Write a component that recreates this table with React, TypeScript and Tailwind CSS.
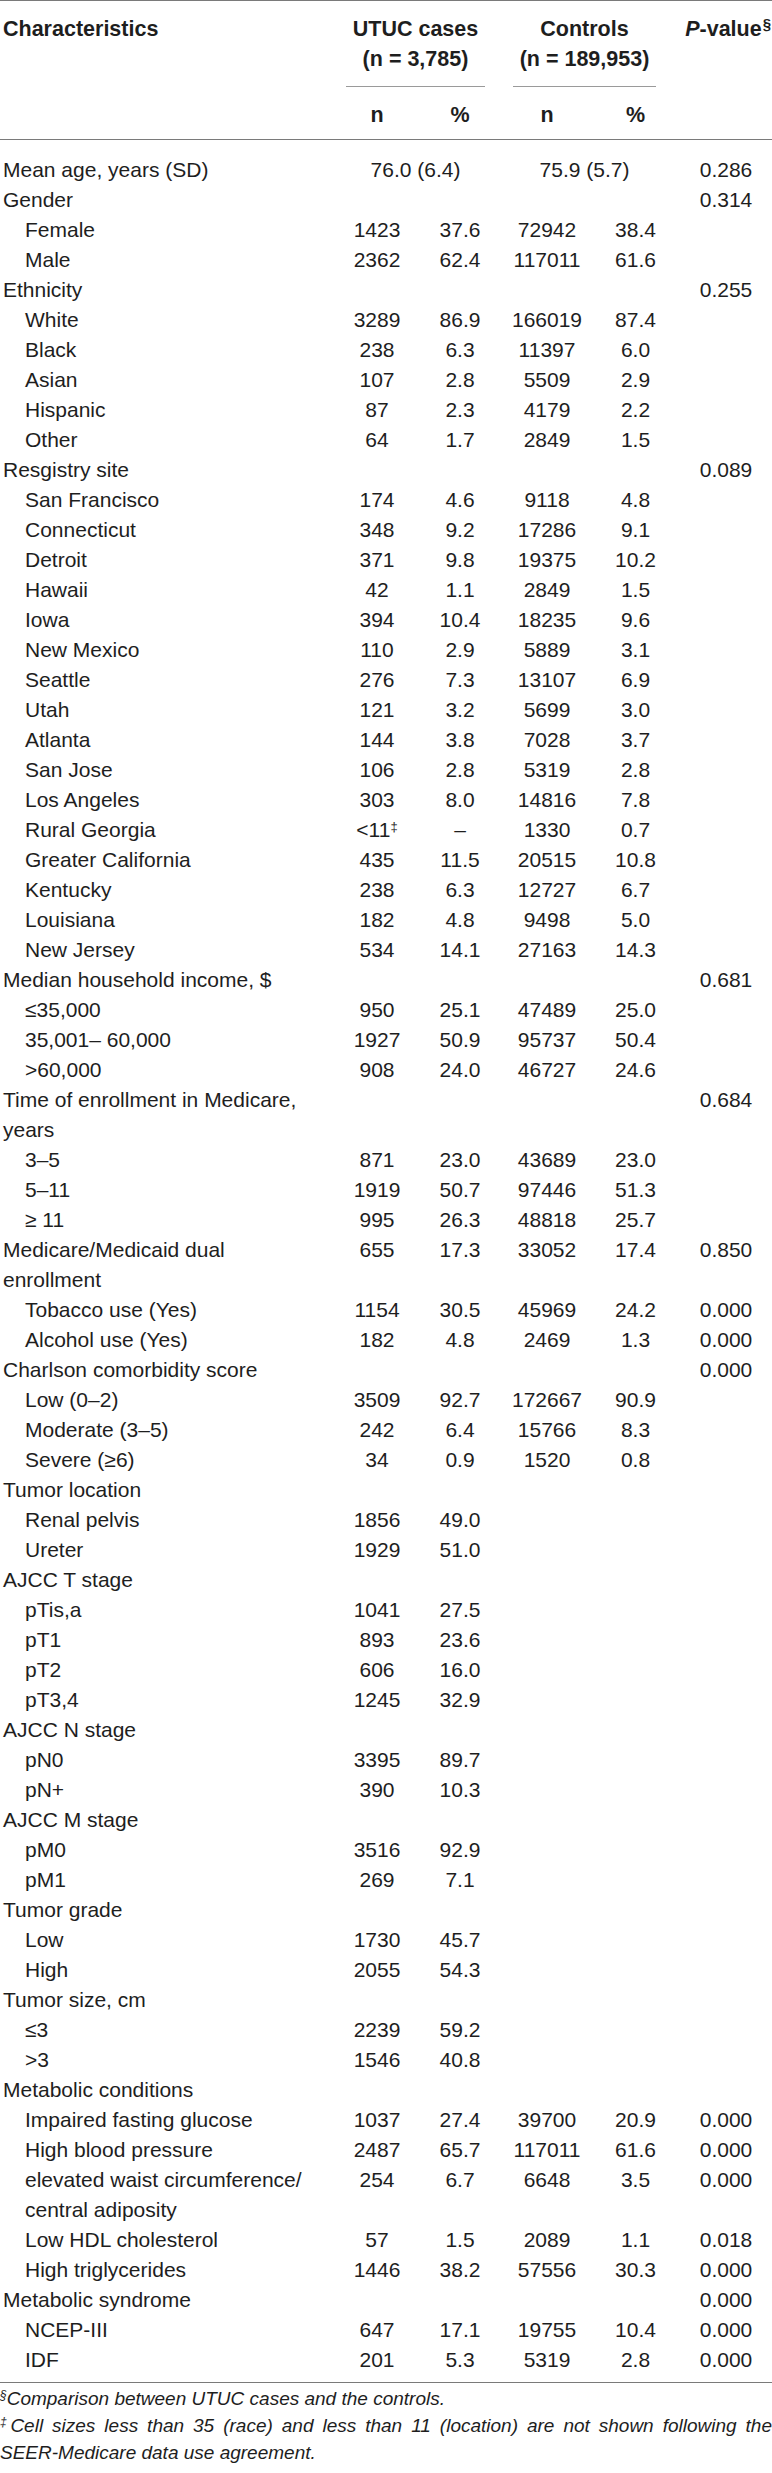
type Row = { l: string[]; i?: boolean; v?: (string | null)[]; m?: [string, string]; p?: string; rural?: boolean };

const r = (l: string, v?: string, p?: string, i = true): Row => ({ l: [l], i, v: v ? v.split(' ') : undefined, p });
const h = (l: string, p?: string): Row => ({ l: [l], p });

const rows: Row[] = [
  { l: ['Mean age, years (SD)'], m: ['76.0 (6.4)', '75.9 (5.7)'], p: '0.286' },
  h('Gender', '0.314'),
  r('Female', '1423 37.6 72942 38.4'),
  r('Male', '2362 62.4 117011 61.6'),
  h('Ethnicity', '0.255'),
  r('White', '3289 86.9 166019 87.4'),
  r('Black', '238 6.3 11397 6.0'),
  r('Asian', '107 2.8 5509 2.9'),
  r('Hispanic', '87 2.3 4179 2.2'),
  r('Other', '64 1.7 2849 1.5'),
  h('Resgistry site', '0.089'),
  r('San Francisco', '174 4.6 9118 4.8'),
  r('Connecticut', '348 9.2 17286 9.1'),
  r('Detroit', '371 9.8 19375 10.2'),
  r('Hawaii', '42 1.1 2849 1.5'),
  r('Iowa', '394 10.4 18235 9.6'),
  r('New Mexico', '110 2.9 5889 3.1'),
  r('Seattle', '276 7.3 13107 6.9'),
  r('Utah', '121 3.2 5699 3.0'),
  r('Atlanta', '144 3.8 7028 3.7'),
  r('San Jose', '106 2.8 5319 2.8'),
  r('Los Angeles', '303 8.0 14816 7.8'),
  { l: ['Rural Georgia'], i: true, v: ['<11', '–', '1330', '0.7'], rural: true },
  r('Greater California', '435 11.5 20515 10.8'),
  r('Kentucky', '238 6.3 12727 6.7'),
  r('Louisiana', '182 4.8 9498 5.0'),
  r('New Jersey', '534 14.1 27163 14.3'),
  h('Median household income, $', '0.681'),
  r('≤35,000', '950 25.1 47489 25.0'),
  r('35,001– 60,000', '1927 50.9 95737 50.4'),
  r('>60,000', '908 24.0 46727 24.6'),
  { l: ['Time of enrollment in Medicare,', 'years'], p: '0.684' },
  r('3–5', '871 23.0 43689 23.0'),
  r('5–11', '1919 50.7 97446 51.3'),
  r('≥ 11', '995 26.3 48818 25.7'),
  { l: ['Medicare/Medicaid dual', 'enrollment'], v: ['655', '17.3', '33052', '17.4'], p: '0.850' },
  r('Tobacco use (Yes)', '1154 30.5 45969 24.2', '0.000'),
  r('Alcohol use (Yes)', '182 4.8 2469 1.3', '0.000'),
  h('Charlson comorbidity score', '0.000'),
  r('Low (0–2)', '3509 92.7 172667 90.9'),
  r('Moderate (3–5)', '242 6.4 15766 8.3'),
  r('Severe (≥6)', '34 0.9 1520 0.8'),
  h('Tumor location'),
  r('Renal pelvis', '1856 49.0'),
  r('Ureter', '1929 51.0'),
  h('AJCC T stage'),
  r('pTis,a', '1041 27.5'),
  r('pT1', '893 23.6'),
  r('pT2', '606 16.0'),
  r('pT3,4', '1245 32.9'),
  h('AJCC N stage'),
  r('pN0', '3395 89.7'),
  r('pN+', '390 10.3'),
  h('AJCC M stage'),
  r('pM0', '3516 92.9'),
  r('pM1', '269 7.1'),
  h('Tumor grade'),
  r('Low', '1730 45.7'),
  r('High', '2055 54.3'),
  h('Tumor size, cm'),
  r('≤3', '2239 59.2'),
  r('>3', '1546 40.8'),
  h('Metabolic conditions'),
  r('Impaired fasting glucose', '1037 27.4 39700 20.9', '0.000'),
  r('High blood pressure', '2487 65.7 117011 61.6', '0.000'),
  { l: ['elevated waist circumference/', 'central adiposity'], i: true, v: ['254', '6.7', '6648', '3.5'], p: '0.000' },
  r('Low HDL cholesterol', '57 1.5 2089 1.1', '0.018'),
  r('High triglycerides', '1446 38.2 57556 30.3', '0.000'),
  h('Metabolic syndrome', '0.000'),
  r('NCEP-III', '647 17.1 19755 10.4', '0.000'),
  r('IDF', '201 5.3 5319 2.8', '0.000'),
];

const grid = 'grid grid-cols-[337px_80px_86px_88px_89px_92px]';

export default function App() {
  return (
    <div className="w-[772px] bg-white text-[#1e1e1e] text-[21px] leading-[30px]" style={{ fontFamily: '"Liberation Sans", Arial, sans-serif' }}>
      <div className="border-t border-[#7a7a7a] pt-[13px] font-bold text-[21.5px]">
        <div className={grid}>
          <div className="pl-[3px]">Characteristics</div>
          <div className="col-span-2 ml-[9px] mr-[18px] text-center whitespace-nowrap">UTUC cases<br />(n = 3,785)</div>
          <div className="col-span-2 ml-[10px] mr-[24px] text-center whitespace-nowrap">Controls<br />(n = 189,953)</div>
          <div className="text-right -ml-[30px] pr-[1px] whitespace-nowrap"><i>P</i>-value<sup className="text-[15px] ml-[1px]">§</sup></div>
        </div>
        <div className={grid + ' mt-[12px]'}>
          <div />
          <div className="col-span-2 ml-[9px] mr-[18px] border-t border-[#9a9a9a]" />
          <div className="col-span-2 ml-[10px] mr-[24px] border-t border-[#9a9a9a]" />
        </div>
        <div className={grid + ' mt-[13px] text-center'}>
          <div />
          <div>n</div>
          <div>%</div>
          <div>n</div>
          <div>%</div>
        </div>
      </div>

      <div className="mt-[9px] border-t border-[#7a7a7a] pt-[15px] pb-[7px] border-b">
        {rows.map((row, k) => (
          <div key={k} className={grid}>
            <div className={(row.i ? 'pl-[25px]' : 'pl-[3px]') + ' whitespace-nowrap'}>
              {row.l.map((t, j) => <div key={j}>{t}</div>)}
            </div>
            {row.m ? (
              <>
                <div className="col-span-2 ml-[9px] mr-[18px] text-center">{row.m[0]}</div>
                <div className="col-span-2 ml-[10px] mr-[24px] text-center">{row.m[1]}</div>
              </>
            ) : (
              [0, 1, 2, 3].map((c) => (
                <div key={c} className="text-center">
                  {row.v?.[c]}
                  {row.rural && c === 0 && <sup className="text-[13px]">‡</sup>}
                </div>
              ))
            )}
            <div className="text-center">{row.p}</div>
          </div>
        ))}
      </div>

      <div className="pt-[2px] text-[19px] leading-[27px] italic">
        <div><sup className="text-[12px]">§</sup>Comparison between UTUC cases and the controls.</div>
        <div className="text-justify [text-align-last:justify]"><sup className="text-[12px]">‡</sup>Cell sizes less than 35 (race) and less than 11 (location) are not shown following the</div>
        <div>SEER-Medicare data use agreement.</div>
      </div>
    </div>
  );
}
